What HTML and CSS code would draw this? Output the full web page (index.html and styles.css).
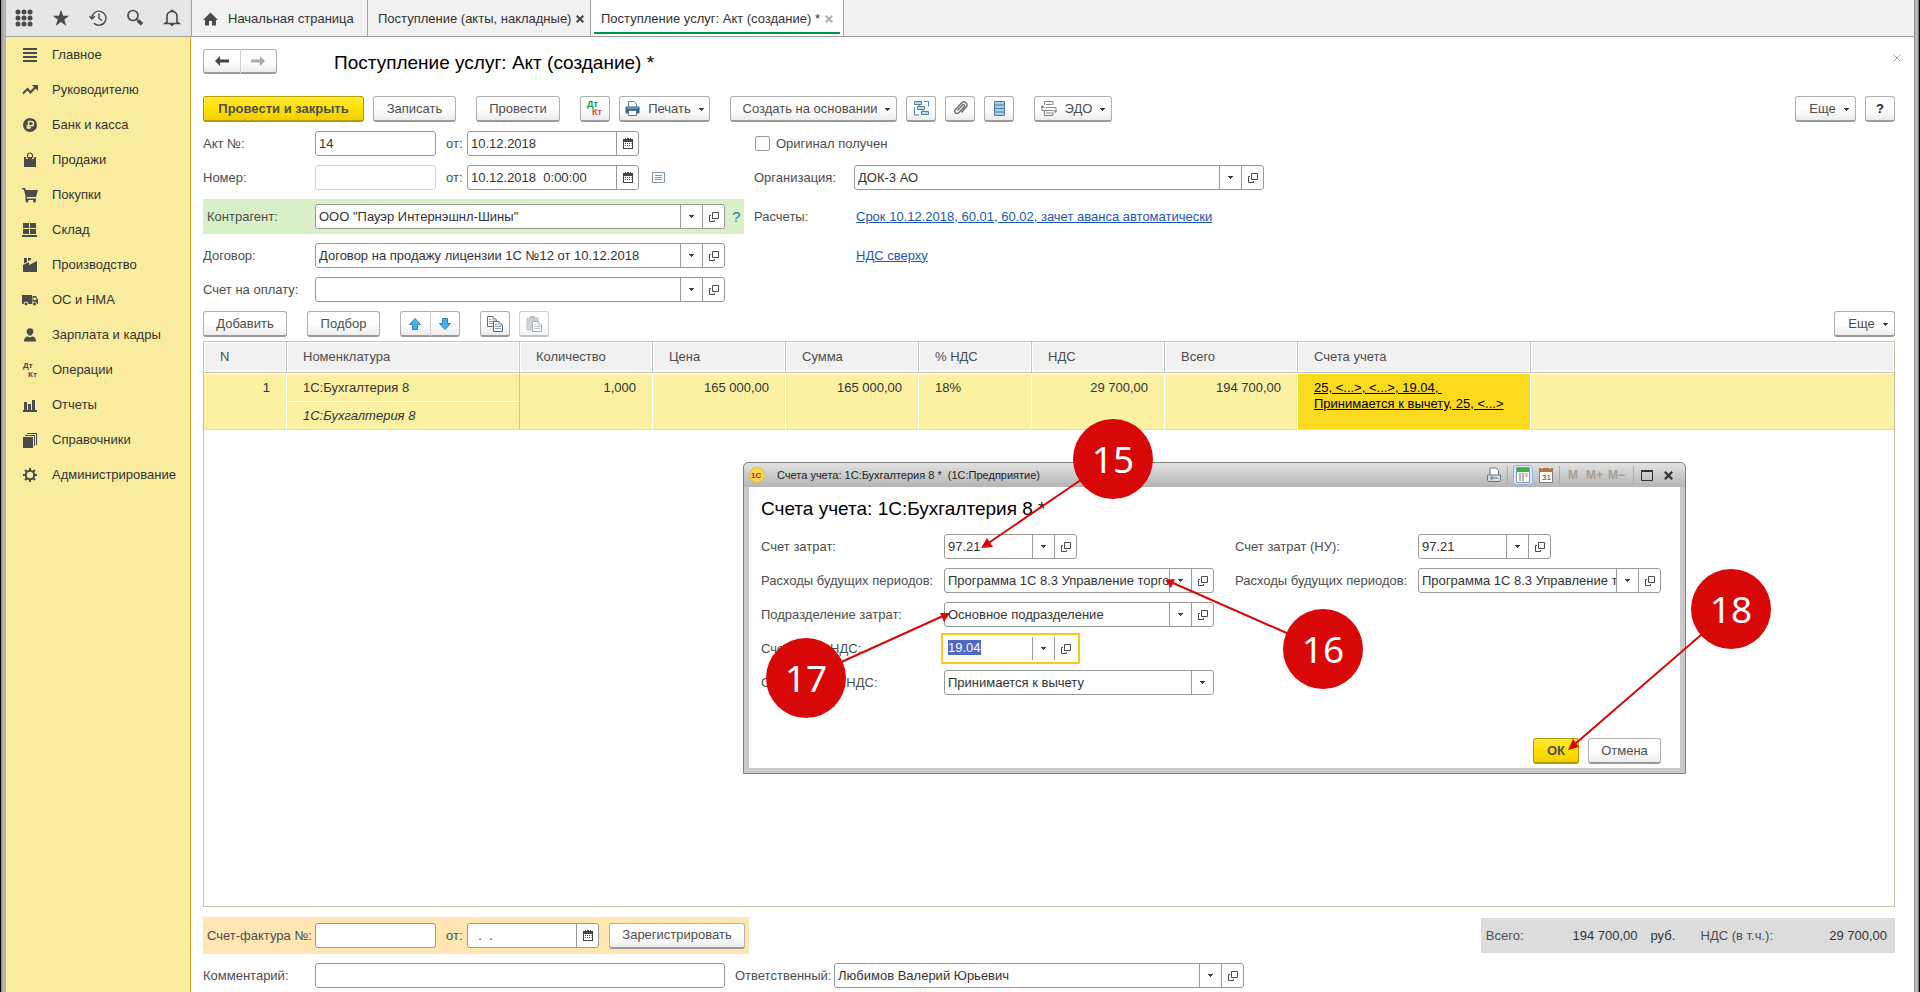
FILE: index.html
```html
<!DOCTYPE html>
<html lang="ru">
<head>
<meta charset="utf-8">
<title>Поступление услуг: Акт (создание) *</title>
<link rel="stylesheet" href="styles.css">
</head>
<body>
<svg class="defs" width="0" height="0" aria-hidden="true">
  <symbol id="i-caret" viewBox="0 0 5 3"><path d="M0 0h5v1H4v1H3v1H2V2H1V1H0z" fill="#404040"/></symbol>
  <symbol id="i-open" viewBox="0 0 10 10"><path d="M3.500.5h6v6h-6zM2 3.500H.5v6h5V8" fill="none" stroke="#4a4a4a"/></symbol>
  <symbol id="i-cal" viewBox="0 0 10 11"><path d="M0 1h2V0h1v1h1V0h2v1h1V0h1v1h2v10H0z" fill="#444"/><path d="M1 4h8v6H1z" fill="#fff"/><path d="M2 5h1v1H2zM4 5h1v1H4zM6 5h1v1H6zM2 7h1v1H2zM4 7h1v1H4zM6 7h1v1H6zM8 5h.5v1H8zM8 7h.5v1H8z" fill="#444"/></symbol>
  <symbol id="i-x" viewBox="0 0 8 8"><path d="M.7.7l6.600 6.600M7.300.7L.7 7.300" fill="none" stroke="currentColor" stroke-width="2"/></symbol>
  <symbol id="i-page" viewBox="0 0 10 11"><path d="M.5.5h5.500l3.500 3.500v6.500h-9z" fill="#fff" stroke="#5b6f80"/><path d="M6 .5V4h3.500M2 3.500h2M2 5.500h6M2 7.500h6" fill="none" stroke="#8fa0ae"/></symbol>
</svg>
<div class="frame">
  <header class="topbar">
    <nav class="tools" aria-label="Инструменты">
      <button type="button" aria-label="Меню"><svg width="18" height="18" viewBox="0 0 18 18" fill="#4a4a4a"><circle cx="3" cy="3" r="2.500"/><circle cx="9" cy="3" r="2.500"/><circle cx="15" cy="3" r="2.500"/><circle cx="3" cy="9" r="2.500"/><circle cx="9" cy="9" r="2.500"/><circle cx="15" cy="9" r="2.500"/><circle cx="3" cy="15" r="2.500"/><circle cx="9" cy="15" r="2.500"/><circle cx="15" cy="15" r="2.500"/></svg></button>
      <button type="button" aria-label="Избранное"><svg width="18" height="18" viewBox="0 0 18 18"><path d="M9 .8l2.100 6h6.100l-4.900 3.700 1.900 6.300L9 13l-5.200 3.800 1.900-6.300L.8 6.800h6.100z" fill="#4a4a4a"/></svg></button>
      <button type="button" aria-label="История"><svg width="18" height="18" viewBox="0 0 18 18" fill="none" stroke="#4a4a4a" stroke-width="1.400"><path d="M2.900 9.500A7 7 0 1 1 5 14.200M.5 7l2.400 3 3-2.700M10 4.500v5l3 2"/></svg></button>
      <button type="button" aria-label="Поиск"><svg width="18" height="18" viewBox="0 0 18 18" fill="none" stroke="#4a4a4a"><circle cx="7" cy="6.500" r="5" stroke-width="1.700"/><path d="M10.800 10.300l1.700 1.700" stroke-width="1.500"/><path d="M12 11.500l4 3.800" stroke-width="3.600"/></svg></button>
      <button type="button" aria-label="Уведомления"><svg width="18" height="18" viewBox="0 0 18 18"><path d="M4 13V7.500C4 4.500 5.800 2.500 9 2.500s5 2 5 5V13l2 1.500H2z" fill="none" stroke="#4a4a4a" stroke-width="1.600"/><path d="M7.500.8h3v1.500h-3zM6.500 15h5L9 17.500z" fill="#4a4a4a"/></svg></button>
    </nav>
    <div class="tabs">
      <a class="tab home" href="#"><svg width="15" height="14" viewBox="0 0 15 14"><path d="M7.500.5L15 8h-2v5.500H9V9H6v4.500H2V8H0z" fill="#4a4a4a"/></svg>Начальная страница</a>
      <a class="tab" href="#">Поступление (акты, накладные)<svg class="x dark" width="8" height="8"><use href="#i-x"/></svg></a>
      <a class="tab active" href="#">Поступление услуг: Акт (создание) *<svg class="x" width="8" height="8"><use href="#i-x"/></svg></a>
    </div>
  </header>
  <div class="body">
    <nav class="side" aria-label="Разделы">
      <a href="#"><svg width="16" height="16" viewBox="0 0 16 16"><path d="M1 1h14v2H1zM1 5h14v2H1zM1 9h14v2H1zM1 13h14v2H1z"/></svg>Главное</a>
      <a href="#"><svg width="16" height="16" viewBox="0 0 16 16"><path d="M1 11.500l4.500-4.500 3 3.500 4.500-5" fill="none" stroke="#4a4a4a" stroke-width="2"/><path d="M10 3h6v6z"/></svg>Руководителю</a>
      <a href="#"><svg width="16" height="16" viewBox="0 0 16 16"><circle cx="8" cy="8" r="7"/><path d="M6.500 12V4.500h2.800a2 2 0 0 1 0 4.300H4.500M4.500 10.700h4.500" fill="none" stroke="#faec9e" stroke-width="1.500"/></svg>Банк и касса</a>
      <a href="#"><svg width="16" height="16" viewBox="0 0 16 16"><path d="M2 5h12v10H2z"/><path d="M5 7V3.500a3 3 0 0 1 6 0V7" fill="none" stroke="#faec9e" stroke-width="2"/><path d="M5.500 6V3.500a2.500 2.500 0 0 1 5 0V6" fill="none" stroke="#4a4a4a" stroke-width="1.200"/></svg>Продажи</a>
      <a href="#"><svg width="16" height="16" viewBox="0 0 16 16"><path d="M0 1h3l1 2h12l-2 7H5v1.500h9V13H3.500V9L2 2.500H0z"/><circle cx="5" cy="14" r="1.500"/><circle cx="12.500" cy="14" r="1.500"/></svg>Покупки</a>
      <a href="#"><svg width="16" height="16" viewBox="0 0 16 16"><path d="M1 1h6v5H1zM8 1h6v5H8zM1 7h6v5H1zM8 7h6v5H8zM0 13h15v2H0z"/></svg>Склад</a>
      <a href="#"><svg width="16" height="16" viewBox="0 0 16 16"><path d="M1 15V8l6-3v3l8-4v11zM2 1h3v4L2 6.500zM6 1h3v2L6 4z"/></svg>Производство</a>
      <a href="#"><svg width="16" height="16" viewBox="0 0 16 16"><path d="M0 3h10v9H0zM10.500 4H14l2 4v4h-5.500z"/><path d="M11.500 5.500h2l1 2.500h-3z" fill="#faec9e"/><circle cx="4" cy="12" r="2" stroke="#faec9e"/><circle cx="12.500" cy="12" r="2" stroke="#faec9e"/></svg>ОС и НМА</a>
      <a href="#"><svg width="16" height="16" viewBox="0 0 16 16"><circle cx="8" cy="4.500" r="3.300"/><path d="M5.500 4h5L9.500 8.500h-3zM2 14.500c0-3.500 1.500-5 4-5l2 1 2-1c2.500 0 4 1.500 4 5z"/></svg>Зарплата и кадры</a>
      <a href="#"><svg width="16" height="16" viewBox="0 0 16 16" font-size="8" font-weight="bold"><text x="1" y="6">Дт</text><text x="6" y="15">Кт</text></svg>Операции</a>
      <a href="#"><svg width="16" height="16" viewBox="0 0 16 16"><path d="M1 13h14v2H1zM2 5h3v8H2zM6 7h3v6H6zM10 3h3v10h-3z"/></svg>Отчеты</a>
      <a href="#"><svg width="16" height="16" viewBox="0 0 16 16"><path d="M1 5h10v11H1zM3 3h10v11h-1V4H3zM5 1h10v12h-1V2H5z"/></svg>Справочники</a>
      <a href="#"><svg class="line-icon" width="16" height="16" viewBox="0 0 16 16" stroke="#4a4a4a"><circle cx="8" cy="8" r="4.200" stroke-width="2"/><path d="M8 1v2.500M8 12.500V15M1 8h2.500M12.500 8H15M3 3l1.800 1.800M11.200 11.200L13 13M3 13l1.800-1.800M11.200 4.800L13 3" stroke-width="2"/></svg>Администрирование</a>
    </nav>
    <main class="main">
      <div class="head">
        <div class="pair">
          <button class="btn" type="button" aria-label="Назад"><svg width="14" height="10" viewBox="0 0 14 10"><path d="M5 0v3.500h9v3H5V10L0 5z" fill="#444"/></svg></button>
          <button class="btn" type="button" aria-label="Вперед"><svg width="14" height="10" viewBox="0 0 14 10"><path d="M9 0v3.500H0v3h9V10l5-5z" fill="#aaa"/></svg></button>
        </div>
        <h1>Поступление услуг: Акт (создание) *</h1>
        <button class="close" type="button" aria-label="Закрыть"><svg width="8" height="8" viewBox="0 0 8 8"><path d="M.5.5l7 7M7.500.5l-7 7" stroke="#a0a0a0" fill="none"/></svg></button>
      </div>
      <div class="doc">
        <div class="bar">
          <button class="btn gold w-post" type="button">Провести и закрыть</button>
          <button class="btn w-save" type="button">Записать</button>
          <button class="btn w-do far" type="button">Провести</button>
          <button class="btn sq far" type="button" aria-label="Дт Кт"><svg width="18" height="18" viewBox="0 0 18 18" font-size="9" font-weight="bold"><text x="1" y="7" fill="#009646">Дт</text><text x="6" y="15" fill="#e04040">Кт</text></svg></button>
          <button class="btn w-print" type="button"><svg width="15" height="15" viewBox="0 0 15 15"><path d="M3.500 6V.5h5.500l2.500 2.500v3" fill="#fff" stroke="#5c7a94"/><rect x=".5" y="5.500" width="14" height="7" rx="1" fill="#35618a"/><path d="M2 7h11" stroke="#9fc0d8"/><path d="M3.500 9.500h8v5h-8z" fill="#fff" stroke="#5c7a94"/></svg>Печать<svg class="caret" width="5" height="3"><use href="#i-caret"/></svg></button>
          <button class="btn w-base far" type="button">Создать на основании<svg class="caret" width="5" height="3"><use href="#i-caret"/></svg></button>
          <button class="btn sq" type="button" aria-label="Структура подчиненности"><svg width="15" height="15" viewBox="0 0 15 15" fill="none" stroke="#4b81a8"><path d="M10 .5h4.500v5M.5 6v8H5"/><path d="M.5.500h7v3h-7zM3.500 5.500h7v3h-7zM7.500 10.500h7v3h-7zM5 4v2M9 8v3" fill="#b9d7ea"/></svg></button>
          <button class="btn sq" type="button" aria-label="Вложения"><svg width="15" height="15" viewBox="0 0 15 15"><path d="M4.500 9.500l5-5.500a1.200 1.200 0 0 1 1.800 1.700l-5.500 6a2.300 2.300 0 0 1-3.500-3L8.500 2a3 3 0 0 1 4.700 4L8.500 11.500" fill="none" stroke="#666" stroke-width="1.300"/></svg></button>
          <button class="btn sq" type="button" aria-label="Список"><svg width="11" height="15" viewBox="0 0 11 15"><path d="M.5.5h10v14H.5z" fill="#a9cbe3" stroke="#4b81a8"/><path d="M0 4h11M0 7.500h11M0 11h11" stroke="#4b81a8"/></svg></button>
          <button class="btn w-edo far" type="button"><svg width="16" height="15" viewBox="0 0 16 15" fill="none" stroke="#888"><path d="M3.500 4V.5h8.500V4M3.500 10v4.500h8.500V11M5 3.500h6M5 6.500h10M1 9.500h11M5 12h6"/><path d="M1 9.500V6M15 6.500V10" /><path d="M-1 7l2.500-3L4 7zM12 9.500h5L14.500 12z" fill="#888" stroke="none"/></svg>ЭДО<svg class="caret" width="5" height="3"><use href="#i-caret"/></svg></button>
          <button class="btn w-more push" type="button">Еще<svg class="caret" width="5" height="3"><use href="#i-caret"/></svg></button>
          <button class="btn sq strong" type="button">?</button>
        </div>
        <form class="form">
          <div class="line">
            <label class="cap" for="act">Акт №:</label><span class="field w-no"><input id="act" value="14"></span>
            <label class="ot" for="d1">от:</label><span class="field w-date"><input id="d1" value="10.12.2018"><button type="button" aria-label="Календарь"><svg width="10" height="11"><use href="#i-cal"/></svg></button></span>
          </div>
          <div class="line"><input class="check" type="checkbox" id="orig"><label for="orig">Оригинал получен</label></div>
          <div class="line">
            <label class="cap" for="num">Номер:</label><span class="field w-no pale"><input id="num"></span>
            <label class="ot" for="d2">от:</label><span class="field w-date"><input id="d2" value="10.12.2018  0:00:00"><button type="button" aria-label="Календарь"><svg width="10" height="11"><use href="#i-cal"/></svg></button></span>
            <svg class="note" width="13" height="11" viewBox="0 0 13 11"><path d="M.5.5h12v10H.5zM3 3.500h7M3 5.500h7M3 7.500h7" fill="none" stroke="#8395a5"/></svg>
          </div>
          <div class="line"><label class="cap2" for="org">Организация:</label><span class="field w-long"><input id="org" value="ДОК-3 АО"><button type="button" aria-label="Выбрать"><svg width="5" height="3"><use href="#i-caret"/></svg></button><button type="button" aria-label="Открыть"><svg width="10" height="10"><use href="#i-open"/></svg></button></span></div>
          <div class="line green"><label class="cap" for="kon">Контрагент:</label><span class="field w-long"><input id="kon" value="ООО &quot;Пауэр Интернэшнл-Шины&quot;"><button type="button" aria-label="Выбрать"><svg width="5" height="3"><use href="#i-caret"/></svg></button><button type="button" aria-label="Открыть"><svg width="10" height="10"><use href="#i-open"/></svg></button></span><a class="q" href="#">?</a></div>
          <div class="line"><span class="cap2">Расчеты:</span><a class="link" href="#">Срок 10.12.2018, 60.01, 60.02, зачет аванса автоматически</a></div>
          <div class="line"><label class="cap" for="dog">Договор:</label><span class="field w-long"><input id="dog" value="Договор на продажу лицензии 1С №12 от 10.12.2018"><button type="button" aria-label="Выбрать"><svg width="5" height="3"><use href="#i-caret"/></svg></button><button type="button" aria-label="Открыть"><svg width="10" height="10"><use href="#i-open"/></svg></button></span></div>
          <div class="line"><span class="cap2"></span><a class="link" href="#">НДС сверху</a></div>
          <div class="line"><label class="cap" for="bill">Счет на оплату:</label><span class="field w-long"><input id="bill"><button type="button" aria-label="Выбрать"><svg width="5" height="3"><use href="#i-caret"/></svg></button><button type="button" aria-label="Открыть"><svg width="10" height="10"><use href="#i-open"/></svg></button></span></div>
        </form>
        <div class="bar">
          <button class="btn w-add" type="button">Добавить</button>
          <button class="btn w-pick far" type="button">Подбор</button>
          <div class="pair small far">
            <button class="btn" type="button" aria-label="Вверх"><svg width="12" height="12" viewBox="0 0 12 12"><path d="M6 .5l5.500 6H8.500v5h-5v-5H.5z" fill="#45b0ee" stroke="#2a7fb8"/></svg></button>
            <button class="btn" type="button" aria-label="Вниз"><svg width="12" height="12" viewBox="0 0 12 12"><path d="M6 11.500l5.500-6H8.500v-5h-5v5H.5z" fill="#45b0ee" stroke="#2a7fb8"/></svg></button>
          </div>
          <button class="btn sq far" type="button" aria-label="Копировать"><svg width="16" height="16" viewBox="0 0 16 16"><use href="#i-page" width="10" height="11"/><use href="#i-page" x="6" y="5" width="10" height="11"/></svg></button>
          <button class="btn sq off" type="button" disabled aria-label="Вставить"><svg width="16" height="16" viewBox="0 0 16 16"><path d="M1 2h11v12H1z" fill="#b8b4ae" stroke="#999"/><path d="M4 0h5v3H4z" fill="#999"/><use href="#i-page" x="6" y="5" width="10" height="11"/></svg></button>
          <button class="btn w-more push" type="button">Еще<svg class="caret" width="5" height="3"><use href="#i-caret"/></svg></button>
        </div>
        <div class="list">
          <table>
            <colgroup><col class="c-n"><col class="c-name"><col class="c-sum"><col class="c-sum"><col class="c-sum"><col class="c-pct"><col class="c-sum"><col class="c-sum"><col class="c-name"><col></colgroup>
            <thead><tr><th>N</th><th>Номенклатура</th><th>Количество</th><th>Цена</th><th>Сумма</th><th>% НДС</th><th>НДС</th><th>Всего</th><th>Счета учета</th><th></th></tr></thead>
            <tbody>
              <tr><td class="r" rowspan="2">1</td><td class="nm">1С:Бухгалтерия 8</td><td class="r" rowspan="2">1,000</td><td class="r" rowspan="2">165 000,00</td><td class="r" rowspan="2">165 000,00</td><td rowspan="2">18%</td><td class="r" rowspan="2">29 700,00</td><td class="r" rowspan="2">194 700,00</td><td class="cur" rowspan="2"><a href="#">25, &lt;...&gt;, &lt;...&gt;, 19.04,&nbsp;<br>Принимается к вычету, 25, &lt;...&gt;</a></td><td class="rest" rowspan="2"></td></tr>
              <tr><td class="it">1С:Бухгалтерия 8</td></tr>
            </tbody>
          </table>
        </div>
        <div class="foot">
          <div class="invoice">
            <label class="cap" for="sf">Счет-фактура №:</label><span class="field w-no"><input id="sf"></span>
            <label class="ot" for="d3">от:</label><span class="field w-short"><input id="d3" value="  .  ."><button type="button" aria-label="Календарь"><svg width="10" height="11"><use href="#i-cal"/></svg></button></span>
            <button class="btn w-reg" type="button">Зарегистрировать</button>
          </div>
          <div class="totals"><span>Всего:</span><output class="sum">194 700,00</output><span class="rub">руб.</span><span>НДС (в т.ч.):</span><output class="sum">29 700,00</output></div>
        </div>
        <div class="line">
          <label class="cap" for="com">Комментарий:</label><span class="field w-long"><input id="com"></span>
          <label class="resp" for="otv">Ответственный:</label><span class="field w-long"><input id="otv" value="Любимов Валерий Юрьевич"><button type="button" aria-label="Выбрать"><svg width="5" height="3"><use href="#i-caret"/></svg></button><button type="button" aria-label="Открыть"><svg width="10" height="10"><use href="#i-open"/></svg></button></span>
        </div>
      </div>
    </main>
  </div>
</div>

<section class="dialog" role="dialog" aria-labelledby="dlg">
  <div class="title">
    <svg width="16" height="16" viewBox="0 0 16 16"><circle cx="8" cy="8" r="7.500" fill="#fbd94a" stroke="#e9b93c"/><text x="2" y="11" font-size="8" font-weight="bold" fill="#d40000">1С</text></svg>
    <span class="name">Счета учета: 1С:Бухгалтерия 8 *&nbsp; (1С:Предприятие)</span>
    <button type="button" aria-label="Печать"><svg width="16" height="16" viewBox="0 0 16 16"><path d="M4 8V1h6l2.500 2.500V8" fill="#fff" stroke="#6a7480"/><path d="M1.500 8h13v5l-1 1.500h-11L1.500 13z" fill="#d7dde2" stroke="#6a7480"/><path d="M4 11h8M6 9v4" stroke="#6a7480"/></svg></button>
    <i></i>
    <button class="on" type="button" aria-label="Калькулятор"><svg width="14" height="16" viewBox="0 0 14 16"><path d="M.5.5h13v15H.5z" fill="#fff" stroke="#8a9890"/><path d="M1 1h12v4H1z" fill="#3cb44a"/><path d="M3 7h2M6 7h2M3 9h2M6 9h2M3 11h2M6 11h2M3 13h2M6 13h2" stroke="#667"/><path d="M9.500 7h2M9.500 9h2" stroke="#c33"/></svg></button>
    <button type="button" aria-label="Календарь"><svg width="14" height="16" viewBox="0 0 14 16"><path d="M.5 2.500h13v13H.5z" fill="#fff" stroke="#7a8088"/><path d="M0 1h14v4H0z" fill="#b5703c"/><path d="M3 0v2M11 0v2" stroke="#fff"/><text x="3" y="13" font-size="8" fill="#333">31</text></svg></button>
    <i></i>
    <button class="m" type="button">M</button><button class="m" type="button">M+</button><button class="m" type="button">M−</button>
    <i class="wide"></i>
    <button type="button" aria-label="Развернуть"><svg width="12" height="11" viewBox="0 0 12 11"><path d="M.5 1h11v9.500H.5z" fill="none" stroke="#333"/><path d="M0 1h12" stroke="#333" stroke-width="2"/></svg></button>
    <button class="dx" type="button" aria-label="Закрыть"><svg width="9" height="9"><use href="#i-x"/></svg></button>
  </div>
  <div class="pane">
    <h2 id="dlg">Счета учета: 1С:Бухгалтерия 8 *</h2>
    <div class="fields">
      <label for="a1">Счет затрат:</label><span class="field w-acc"><input id="a1" value="97.21"><button type="button" aria-label="Выбрать"><svg width="5" height="3"><use href="#i-caret"/></svg></button><button type="button" aria-label="Открыть"><svg width="10" height="10"><use href="#i-open"/></svg></button></span>
      <label for="b1">Счет затрат (НУ):</label><span class="field w-acc"><input id="b1" value="97.21"><button type="button" aria-label="Выбрать"><svg width="5" height="3"><use href="#i-caret"/></svg></button><button type="button" aria-label="Открыть"><svg width="10" height="10"><use href="#i-open"/></svg></button></span>
      <label for="a2">Расходы будущих периодов:</label><span class="field"><input id="a2" value="Программа 1С 8.3 Управление торговлей"><button type="button" aria-label="Выбрать"><svg width="5" height="3"><use href="#i-caret"/></svg></button><button type="button" aria-label="Открыть"><svg width="10" height="10"><use href="#i-open"/></svg></button></span>
      <label for="b2">Расходы будущих периодов:</label><span class="field"><input id="b2" value="Программа 1С 8.3 Управление торговлей"><button type="button" aria-label="Выбрать"><svg width="5" height="3"><use href="#i-caret"/></svg></button><button type="button" aria-label="Открыть"><svg width="10" height="10"><use href="#i-open"/></svg></button></span>
      <label class="start" for="a3">Подразделение затрат:</label><span class="field"><input id="a3" value="Основное подразделение"><button type="button" aria-label="Выбрать"><svg width="5" height="3"><use href="#i-caret"/></svg></button><button type="button" aria-label="Открыть"><svg width="10" height="10"><use href="#i-open"/></svg></button></span>
      <label class="start" for="a4">Счет учета НДС:</label><span class="field w-acc focus"><span class="val"><mark id="a4" tabindex="0" role="textbox">19.04</mark></span><button type="button" aria-label="Выбрать"><svg width="5" height="3"><use href="#i-caret"/></svg></button><button type="button" aria-label="Открыть"><svg width="10" height="10"><use href="#i-open"/></svg></button></span>
      <label class="start" for="a5">Способ учета НДС:</label><span class="field pick"><select id="a5"><option>Принимается к вычету</option></select><span class="drop"><svg width="5" height="3"><use href="#i-caret"/></svg></span></span>
    </div>
    <div class="actions"><button class="btn gold w-ok" type="button">ОК</button><button class="btn w-cancel" type="button">Отмена</button></div>
  </div>
  <svg class="marks" width="1040" height="360" viewBox="0 -48 1040 360">
    <g stroke="#d80808" stroke-width="2"><path d="M370-5L244 81M580 186L430 120M63 215L200 153M988 146L832 281"/></g>
    <g fill="#d80808">
      <path d="M238 85l6-10 6 9zM422 117l10-1-4 9zM207 150l-6 9-4-9zM825 287l5-11 6 8z"/>
      <circle cx="370" cy="-4" r="40"/><circle cx="580" cy="186" r="40"/><circle cx="63" cy="215" r="40"/><circle cx="988" cy="146" r="40"/>
    </g>
    <g class="nums"><text x="370" y="10">15</text><text x="580" y="200">16</text><text x="63" y="229">17</text><text x="988" y="160">18</text></g>
  </svg>
</section>
</body>
</html>
```
FILE: styles.css
```css
* { box-sizing: border-box; }
body {
  margin: 0;
  position: relative;
  font: 13px/16px "Liberation Sans", Arial, sans-serif;
  color: #4d4d4d;
}
a { color: inherit; text-decoration: none; }
button, input, select { font: inherit; color: inherit; margin: 0; border: 0; border-radius: 0; background: none; padding: 0; }
svg { display: block; flex: none; }
.defs { position: absolute; }

.frame {
  min-height: 100vh;
  display: flex;
  flex-direction: column;
  padding: 0 6px;
  background:
    linear-gradient(to right, #000 1px, #8d8d8d 1px, #8d8d8d 2px, #b5b0b1 2px) left / 6px 100% no-repeat,
    linear-gradient(to left, #000 1px, #777 1px, #777 2px, #b9b6b6 2px, #b9b6b6 5px, #8d8d8d 5px) right / 6px 100% no-repeat,
    #fff;
}

/* Top bar */
.topbar { display: flex; height: 37px; background: #f1f1f1; border-bottom: 1px solid #a0a0a0; }
.tools { display: flex; width: 186px; padding: 0 9px; gap: 19px; background: #e6e6e6; border-right: 1px solid #a0a0a0; }
.tools button { width: 18px; }
.tabs { display: flex; color: #333; }
.tab { display: flex; align-items: center; gap: 5px; padding: 1px 10px 0; border-right: 1px solid #a0a0a0; white-space: nowrap; }
.tab.home { width: 176px; gap: 10px; padding-left: 11px; }
.tab:nth-child(2) { width: 223px; justify-content: space-between; }
.tab.active { position: relative; width: 253px; justify-content: space-between; background: #fff; }
.tab.active::after { content: ""; position: absolute; left: 3px; right: 3px; bottom: 2px; height: 2px; background: #009646; }
.x { color: #b0b0b0; }
.x.dark { color: #444; }

.body { flex: 1; display: flex; }

/* Sections */
.side { width: 185px; flex: none; background: #faec9e; border-right: 1px solid #c0a41a; color: #333; }
.side a { display: flex; align-items: center; gap: 14px; height: 35px; padding-left: 16px; }
.side svg { fill: #4a4a4a; }
.side .line-icon { fill: none; }

/* Document */
.main { flex: 1; min-width: 0; display: flex; flex-direction: column; gap: 22px; padding: 12px 12px 4px; }
.head { display: flex; align-items: flex-start; }
h1 { margin: 4px 0 0 57px; font-size: 19px; line-height: 20px; font-weight: normal; color: #000; }
.close { margin: 5px 0 0 auto; padding-right: 1px; }
.doc { flex: 1; display: flex; flex-direction: column; gap: 9px; padding-right: 7px; }

.btn {
  display: inline-flex;
  align-items: center;
  justify-content: center;
  height: 26px;
  border: 1px solid #b0b0b0;
  border-bottom: 2px solid #9a9a9a;
  border-radius: 3px;
  background: linear-gradient(#fff 50%, #ececec);
  white-space: nowrap;
}
.btn.gold { font-weight: bold; border-color: #b39b00; background: linear-gradient(#ffe93c, #ffe100 50%, #f0cf00); }
.btn.strong { font-weight: bold; color: #222; }
.btn.off { opacity: .6; }
.caret { margin: 2px 0 0 8px; }
.w-print > svg:first-child, .w-edo > svg:first-child { margin-right: 8px; }
.sq { width: 30px; }
.far { margin-left: 11px; }
.push { margin-left: auto; }
.w-post { width: 161px; }
.w-save { width: 83px; }
.w-do { width: 84px; }
.w-print { width: 91px; }
.w-base { width: 167px; padding-left: 6px; }
.w-edo { width: 78px; }
.w-more { width: 61px; padding-left: 7px; }
.w-add { width: 84px; }
.w-pick { width: 73px; }
.w-reg { width: 136px; margin-left: 10px; }
.w-ok { width: 46px; }
.w-cancel { width: 73px; }
.bar { display: flex; gap: 9px; }
.pair { display: flex; width: 74px; }
.pair.small { width: 60px; }
.pair .btn { flex: 1; height: 25px; }
.pair.small .btn { height: 26px; }
.pair .btn:first-child { border-radius: 3px 0 0 3px; border-right-color: #d0d0d0; }
.pair .btn:last-child { border-radius: 0 3px 3px 0; border-left: 0; }

.form { display: grid; grid-template-columns: 541px minmax(0, 1fr); gap: 9px 10px; }
.line { display: flex; align-items: center; min-height: 25px; }
.cap { width: 112px; flex: none; }
.cap2 { width: 100px; flex: none; }
.ot { width: 31px; padding-left: 10px; flex: none; }
.green { background: #d7f0c8; height: 35px; padding-left: 4px; }
.green .cap, .invoice .cap { width: 108px; }
.q { margin-left: 7px; font-size: 15px; color: #1a7ab8; }
.link { color: #1c56b8; text-decoration: underline; }
.cap2 + .link { margin-left: 2px; }
.note { margin-left: 13px; }
.check { appearance: none; width: 15px; height: 15px; margin: 0 6px 0 1px; border: 1px solid #999; border-radius: 2px; background: #fff; }

.field { display: flex; height: 25px; border: 1px solid #999; border-radius: 3px; background: #fff; color: #333; overflow: hidden; }
.field.pale { border-color: #d4d4d4; }
.field input { flex: 1; min-width: 0; width: 0; padding-left: 3px; white-space: pre; }
.field button, .drop { display: flex; align-items: center; justify-content: center; width: 22px; flex: none; border-left: 1px solid #999; }
.w-no { width: 121px; }
.w-date { width: 172px; }
.w-short { width: 132px; }
.w-long { width: 410px; }
.w-acc { width: 133px; }

/* Items */
.list { flex: 1; border: 1px solid #c8c4aa; margin-top: -5px; }
table { width: 100%; table-layout: fixed; border-collapse: separate; border-spacing: 0; }
.c-n { width: 83px; }
.c-name { width: 233px; }
.c-sum { width: 133px; }
.c-pct { width: 113px; }
th { height: 31px; padding: 0 16px; text-align: left; font-weight: normal; background: #f1f1f1; border-right: 1px solid #c4c4c4; border-bottom: 1px solid #c4c4c4; box-shadow: inset 0 0 0 1px #fff; }
td { padding: 6px 16px 5px; vertical-align: top; color: #333; background: #fcf0a3; border-right: 1px solid #fff; border-bottom: 1px solid #ddd; }
th:last-child, td.rest { border-right: 0; }
tbody tr:first-child td { border-top: 1px solid #fff; }
td.nm { border-bottom-color: #fff; border-right-color: #c4c4c4; }
td.r { text-align: right; }
td.it { font-style: italic; border-right-color: #c4c4c4; }
td.cur { background: #fada1e; color: #000; white-space: nowrap; }
.cur a { text-decoration: underline; }

/* Footer */
.foot { display: flex; justify-content: space-between; align-items: center; padding-top: 1px; }
.invoice { display: flex; align-items: center; height: 37px; padding: 0 4px; background: #ffe6b3; }
.resp { width: 109px; padding-left: 10px; }
.totals { display: flex; align-items: center; height: 35px; padding: 0 8px 0 5px; background: #dcdcdc; }
.sum { width: 114px; text-align: right; color: #333; }
.rub { width: 63px; padding-left: 13px; color: #333; }

/* Dialog window */
.dialog { position: absolute; left: 743px; top: 462px; width: 943px; padding: 0 5px 5px; border: 1px solid #808080; border-radius: 5px 5px 0 0; background: #c9c9c9; }
.title { display: flex; align-items: center; gap: 5px; height: 24px; margin: 0 -5px; padding: 0 9px 0 5px; border-radius: 5px 5px 0 0; background: linear-gradient(#e2e2e2, #b4b4b4); font-size: 11px; color: #222; }
.title .name { flex: 1; padding-left: 7px; }
.title i { width: 1px; height: 18px; background: #aaa; }
.title .wide { margin-left: 3px; }
.title button { display: flex; align-items: center; justify-content: center; min-width: 16px; height: 20px; }
.title .on { width: 20px; border: 1px solid #8fb4e8; border-radius: 3px; background: #dbe8fb; }
.title .m { font-size: 12px; font-weight: bold; color: #a89c94; }
.dx { color: #333; }
.pane { padding: 11px 19px 4px 12px; background: #fff; }
h2 { margin: 0; font-size: 19px; line-height: 22px; font-weight: normal; color: #000; }
.fields { display: grid; grid-template-columns: 183px 270px 21px 183px minmax(0, 1fr); row-gap: 9px; align-items: center; padding-top: 14px; }
.fields label { white-space: nowrap; }
.fields label[for^="a"] { grid-column: 1; }
.fields label[for^="b"] { grid-column: 4; }
.focus { border-color: transparent; border-radius: 0; outline: 2px solid #fac81e; outline-offset: 1px; }
.val { flex: 1; padding: 3px 0 0 3px; }
.val mark { background: #4f68c4; color: #fff; }
.pick { display: grid; grid-template-columns: minmax(0, 1fr) 22px; }
.pick select { grid-area: 1 / 1 / 2 / 3; appearance: none; padding-left: 3px; }
.drop { grid-area: 1 / 2 / 2 / 3; pointer-events: none; }
.actions { display: flex; justify-content: flex-end; gap: 9px; padding-top: 43px; }
.marks { position: absolute; left: -1px; top: -48px; overflow: visible; pointer-events: none; }
.nums { font: 37px "Noto Sans", sans-serif; fill: #fff; text-anchor: middle; }
```
